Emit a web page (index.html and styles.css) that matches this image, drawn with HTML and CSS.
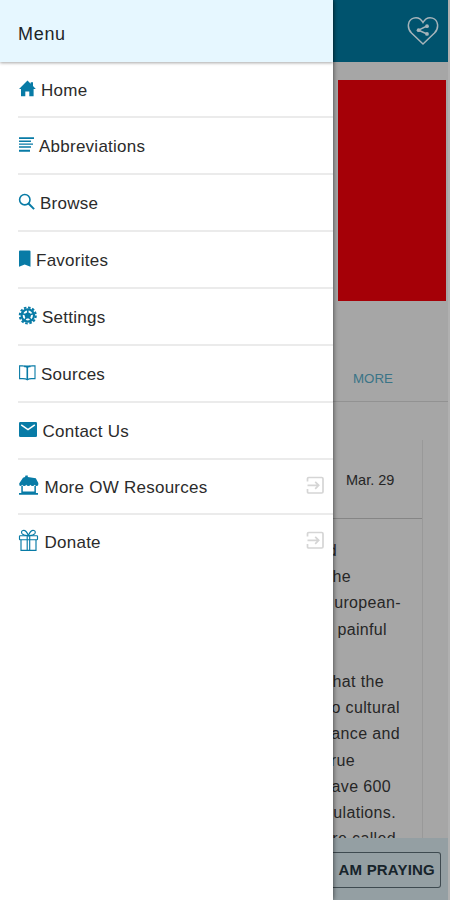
FILE: index.html
```html
<!DOCTYPE html>
<html lang="en">
<head>
<meta charset="utf-8">
<title>Menu</title>
<link rel="stylesheet" href="styles.css">
</head>
<body>
<div class="app">
  <aside class="drawer">
    <header class="drawer-head">Menu</header>
    <nav class="menu">
      <a class="item"><svg class="icon" width="18" height="18" viewBox="0 0 18 18"><path d="M9.500 0.500 1 9h2v7.200h4.300v-4.800h4V16.200h4.300V9h2.200L15 6V2.200h-2.300v1.600z"/></svg><span>Home</span></a>
      <a class="item"><svg class="icon" width="16" height="18" viewBox="0 0 16 18"><path d="M1 1.300h15v1.800H1zM1 4.500h12v1.500H1zM1 7.400h14v1.400H1zM1 10.200h12v1.500H1zM1 13.800h11v1.900H1z"/></svg><span>Abbreviations</span></a>
      <a class="item"><svg class="icon line" width="17" height="18" viewBox="0 0 17 18"><circle cx="6.800" cy="6.700" r="5.200"/><path d="m10.500 10.500 5.600 5.600" stroke-width="2"/></svg><span>Browse</span></a>
      <a class="item"><svg class="icon" width="13" height="18" viewBox="0 0 13 18"><path d="M1 1.500q0-1 1-1h9.500q1 0 1 1v15.200L6.700 14.400 1 16.700z"/></svg><span>Favorites</span></a>
      <a class="item"><svg class="icon line" width="19" height="20" viewBox="0 0 19 20"><circle cx="9.800" cy="9.500" r="8" stroke-width="2" stroke-dasharray="2.500 1.690"/><circle cx="9.800" cy="9.500" r="6.200" stroke-width="2.200"/><circle cx="9.800" cy="9.500" r="2.300" fill="#087ba6"/><path d="M9.800 9.500V4M9.800 9.500l5.200-1.700M9.800 9.500l3.200 4.500M9.800 9.500l-3.200 4.500M9.800 9.500 4.600 7.800" stroke-width="1.500"/></svg><span>Settings</span></a>
      <a class="item"><svg class="icon line" width="18" height="18" viewBox="0 0 18 18"><path d="M9.300 3.300Q7 1.700 3.800 1.900H1.600v12.700h3.300q3 0 4.400 1.100 1.600-1.100 4.300-1.100H17V1.900h-2.200q-3.200-.2-5.500 1.400z" stroke-width="1.100"/><path d="M9.300 3v12.500M6.200 2.400h6.300" stroke-width="1.600"/></svg><span>Sources</span></a>
      <a class="item"><svg class="icon" width="19" height="18" viewBox="0 0 19 18"><rect x="1" y="1" width="18" height="15" rx="1.300"/><path d="m3.200 3.800 6.800 4.800 6.800-4.800" fill="none" stroke="#fff" stroke-width="1.500"/></svg><span>Contact Us</span></a>
      <a class="item"><svg class="icon" width="21" height="24" viewBox="0 0 21 24"><path d="M5 3.800 7 3l.5-1.500h2.300V3l8 1.200L20.300 9q.3 3-1.500 3-1.600 0-2.100-1.300-.7 1.300-2.200 1.300T12.400 10.700Q11.800 12 10.400 12T8.200 10.700Q7.600 12 6.200 12T4.100 10.700Q3.700 12 2.500 12 1 12 1.200 9.500z"/><path d="M3.300 12h1.500v5.600h11.600V12h1.500v7H20v1.800H1V19h2.300z"/></svg><span>More OW Resources</span><svg class="go" width="19" height="19" viewBox="0 0 19 19"><path d="M1.500 5.500V2.800q0-1.300 1.300-1.300h12.900q1.300 0 1.300 1.300v12.900q0 1.300-1.300 1.300H2.800q-1.300 0-1.300-1.300V13M1.500 9.300h10.800M9.200 5.800l3.500 3.500-3.500 3.500"/></svg></a>
      <a class="item"><svg class="icon line" width="21" height="24" viewBox="0 0 21 24"><g stroke-width="1.150"><rect x="1.500" y="6.700" width="18" height="4" rx=".6"/><path d="M3 10.700v10.700h15V10.700M9.200 6.700v14.700M11.700 6.700v14.700M10.400 6.500Q5.500 6.800 3.900 4.500 2.800 2.200 5 1.500q3-.7 5.400 5 2.400-5.700 5.400-5 2.200.7 1.100 3-1.600 2.300-6.500 2z"/></g></svg><span>Donate</span><svg class="go" width="19" height="19" viewBox="0 0 19 19"><path d="M1.500 5.500V2.800q0-1.300 1.300-1.300h12.900q1.300 0 1.300 1.300v12.900q0 1.300-1.300 1.300H2.800q-1.300 0-1.300-1.300V13M1.500 9.300h10.800M9.200 5.800l3.500 3.500-3.500 3.500"/></svg></a>
    </nav>
  </aside>
  <main class="page">
    <header class="bar"><svg width="32" height="30" viewBox="0 0 32 30"><path class="heart" d="M16 28 4.500 17C-.5 12 .8 3.800 6.500 2.100 10.500 1 14 3 16 6.500 18 3 21.500 1 25.500 2.100 31.200 3.800 32.500 12 27.500 17z"/><path class="heart" d="m20 10-8.500 4.200L20 18"/><g fill="#a6b4ba"><circle cx="20" cy="10.200" r="1.900"/><circle cx="11.600" cy="14.200" r="1.900"/><circle cx="20" cy="17.900" r="1.900"/></g></svg></header>
    <div class="banner"></div>
    <div class="more">MORE</div>
    <article class="card">
      <div class="date">Mar. 29</div>
      <div class="story">
        <div>d</div><div>he</div><div>uropean-</div><div>painful</div><div>&nbsp;</div><div>hat the</div><div>o cultural</div><div>ance and</div><div>rue</div><div>ave 600</div><div>ulations.</div><div>re called</div>
      </div>
    </article>
    <footer class="foot"><div class="pray">AM PRAYING</div></footer>
  </main>
</div>
</body>
</html>
```
FILE: styles.css
```css
* { box-sizing: border-box; }
body { margin: 0; font-family: "Liberation Sans", Arial, sans-serif; color: #222; }
.app { display: flex; width: 450px; height: 900px; overflow: hidden; background: #a6a6a6; }
.drawer { flex: 0 0 333px; position: relative; z-index: 1; background: #fff; box-shadow: 0 0 5px rgba(0,0,0,.65); }
.drawer-head { height: 62px; padding: 6px 0 0 18px; display: flex; align-items: center; background: #e6f7ff; font-size: 18px; letter-spacing: .7px; color: #1d2427; box-shadow: 0 1px 3px rgba(0,0,0,.35); }
.menu { display: grid; grid-template-rows: 56px 56.500px 57px 57px 57px 57px 57px 55px 55px; padding-left: 18px; }
.item { display: flex; align-items: center; border-bottom: 2px solid #ebebeb; font-size: 17px; letter-spacing: .25px; color: #2b2b2b; }
.item:last-child { border-bottom: 0; padding-bottom: 2px; }
.item span { padding-top: 3px; margin-left: 5px; white-space: nowrap; }
.item:nth-child(n+7) span { margin-left: 5.500px; }
.icon { flex: none; fill: #087ba6; }
.icon.line { fill: none; stroke: #087ba6; stroke-width: 1.6; }
.go { margin-left: auto; margin-right: 8px; position: relative; top: -1px; fill: none; stroke: #d5d5d5; stroke-width: 1.7; }
.page { flex: 1; min-width: 0; display: flex; flex-direction: column; border-right: 2px solid #b0b0b0; overflow: hidden; }
.bar { flex: 0 0 62px; display: flex; justify-content: flex-end; align-items: center; padding-right: 9px; background: #00536e; }
.heart { fill: none; stroke: #a6b4ba; stroke-width: 1.5; }
.banner { flex: 0 0 221px; margin: 18px 2px 0 5px; background: #a50007; }
.more { flex: 0 0 101px; padding: 70px 0 0 20px; border-bottom: 1px solid #929292; font-size: 13.300px; color: #397487; }
.card { flex: 1; min-height: 0; margin: 38px 25px 0 0; border-right: 1px solid #999; overflow: hidden; }
.date { height: 79px; padding: 32px 0 0 13px; border-bottom: 1px solid #858585; font-size: 14.500px; white-space: nowrap; color: #252525; }
.story { padding-top: 19px; font-size: 16px; letter-spacing: .35px; line-height: 26.200px; text-align: right; white-space: nowrap; color: #262626; }
.story div { display: flex; justify-content: flex-end; padding-right: 22px; }
.story div:nth-child(1) { padding-right: 85px; }
.story div:nth-child(2) { padding-right: 71px; }
.story div:nth-child(3) { padding-right: 21px; }
.story div:nth-child(4) { padding-right: 35px; }
.story div:nth-child(6) { padding-right: 38px; }
.story div:nth-child(9) { padding-right: 67px; }
.story div:nth-child(10) { padding-right: 31px; }
.story div:nth-child(11), .story div:nth-child(12) { padding-right: 26px; }
.foot { flex: 0 0 62px; padding: 14px 7px 12px 0; background: #949fa3; }
.pray { height: 36px; display: flex; align-items: center; justify-content: flex-end; padding: 0 5px 2px 0; border: 1px solid #3e4a50; border-left: 0; border-radius: 0 3px 3px 0; font-size: 15px; font-weight: 700; letter-spacing: .2px; white-space: nowrap; color: #17242b; }
```
